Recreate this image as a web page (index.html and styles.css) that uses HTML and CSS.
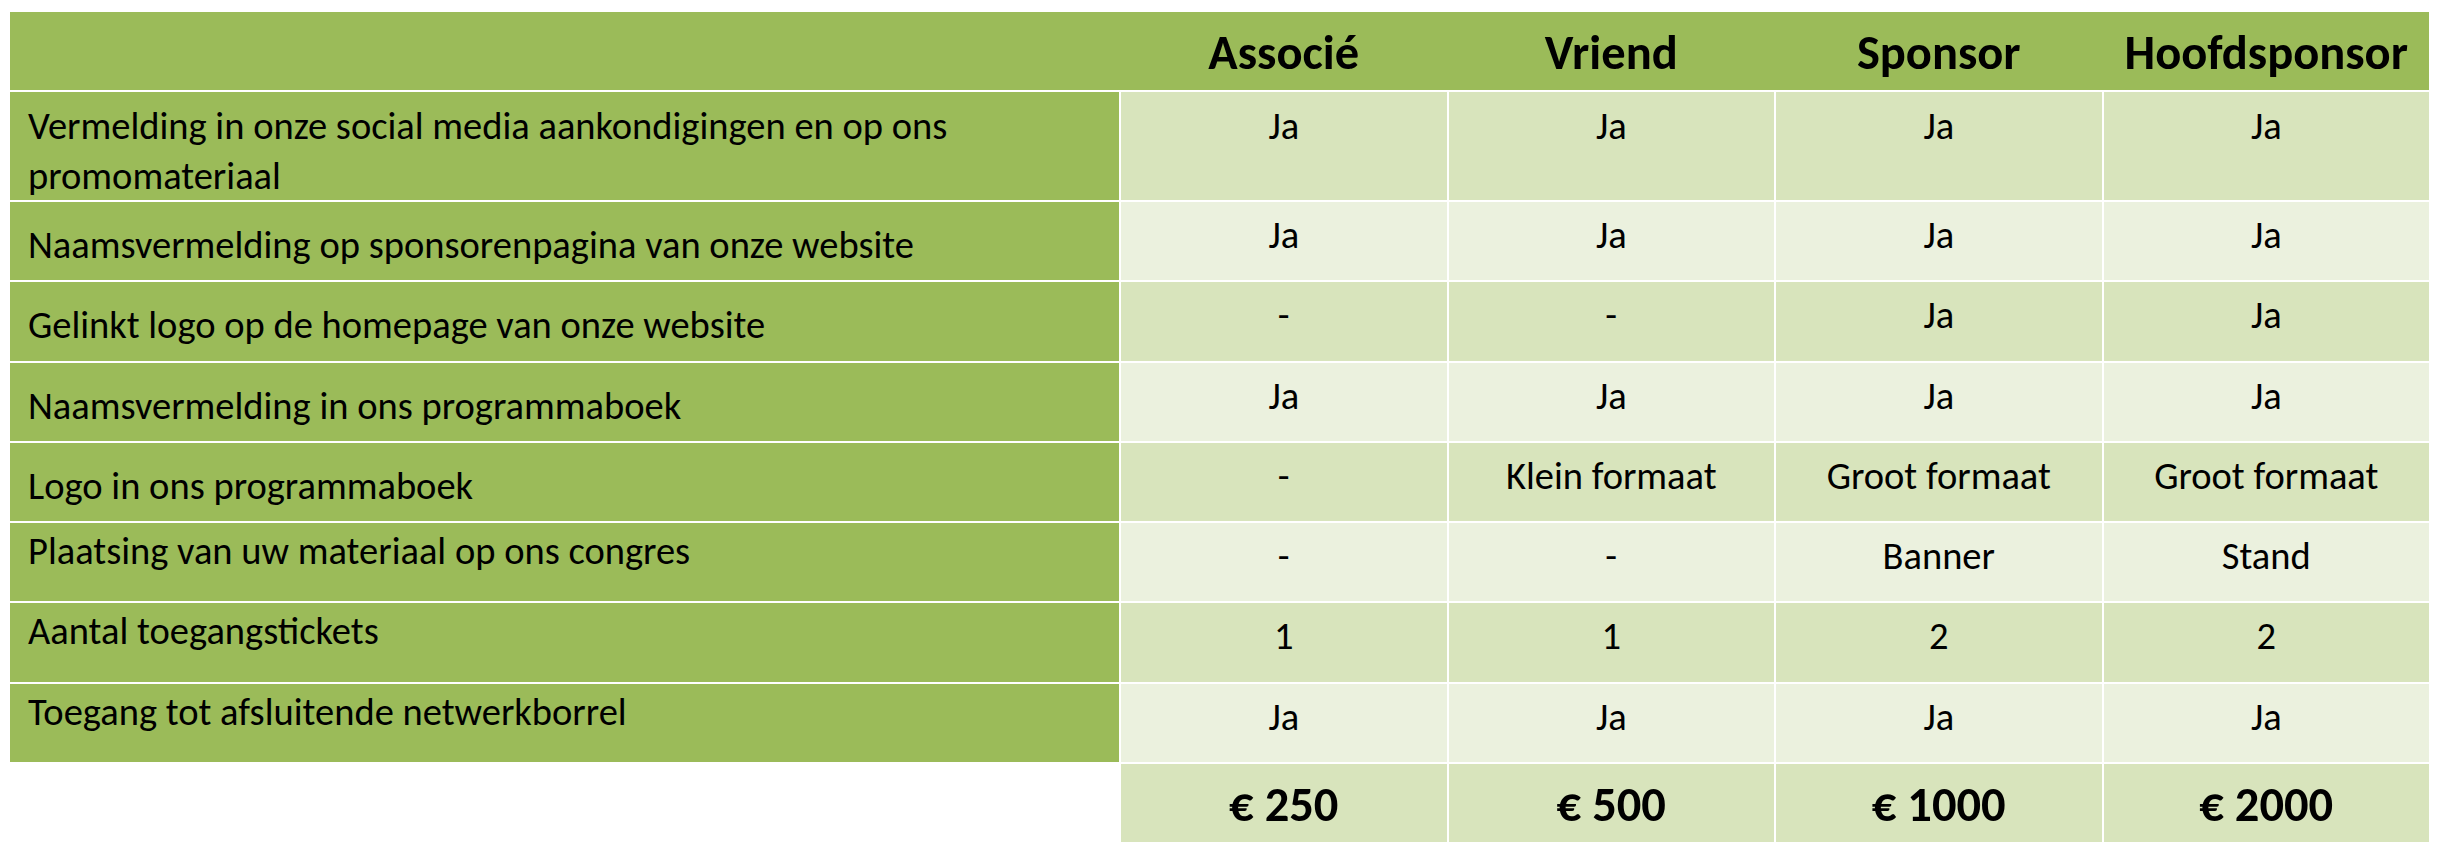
FILE: index.html
```html
<!DOCTYPE html>
<html lang="nl">
<head>
<meta charset="utf-8">
<title>Sponsorpakketten</title>
<link rel="stylesheet" href="styles.css">
</head>
<body>
<div class="table">
  <div class="head">
    <div class="head-cell"></div>
    <div class="head-cell">Associé</div>
    <div class="head-cell">Vriend</div>
    <div class="head-cell">Sponsor</div>
    <div class="head-cell">Hoofdsponsor</div>
  </div>

  <div class="row dark first">
    <div class="label">Vermelding in onze social media aankondigingen en op ons promomateriaal</div>
    <div class="cell">Ja</div><div class="cell">Ja</div><div class="cell">Ja</div><div class="cell">Ja</div>
  </div>
  <div class="row light">
    <div class="label low">Naamsvermelding op sponsorenpagina van onze website</div>
    <div class="cell">Ja</div><div class="cell">Ja</div><div class="cell">Ja</div><div class="cell">Ja</div>
  </div>
  <div class="row dark">
    <div class="label low">Gelinkt logo op de homepage van onze website</div>
    <div class="cell">-</div><div class="cell">-</div><div class="cell">Ja</div><div class="cell">Ja</div>
  </div>
  <div class="row light">
    <div class="label low">Naamsvermelding in ons programmaboek</div>
    <div class="cell">Ja</div><div class="cell">Ja</div><div class="cell">Ja</div><div class="cell">Ja</div>
  </div>
  <div class="row dark">
    <div class="label low">Logo in ons programmaboek</div>
    <div class="cell">-</div><div class="cell">Klein formaat</div><div class="cell">Groot formaat</div><div class="cell">Groot formaat</div>
  </div>
  <div class="row light">
    <div class="label high">Plaatsing van uw materiaal op ons congres</div>
    <div class="cell">-</div><div class="cell">-</div><div class="cell">Banner</div><div class="cell">Stand</div>
  </div>
  <div class="row dark">
    <div class="label high">Aantal toegangstickets</div>
    <div class="cell">1</div><div class="cell">1</div><div class="cell">2</div><div class="cell">2</div>
  </div>
  <div class="row light">
    <div class="label high">Toegang tot afsluitende netwerkborrel</div>
    <div class="cell">Ja</div><div class="cell">Ja</div><div class="cell">Ja</div><div class="cell">Ja</div>
  </div>

  <div class="row price-row">
    <div class="blank"></div>
    <div class="price">€ 250</div>
    <div class="price">€ 500</div>
    <div class="price">€ 1000</div>
    <div class="price">€ 2000</div>
  </div>
</div>
</body>
</html>
```
FILE: styles.css
```css
html, body {
  margin: 0;
  padding: 0;
  background: #ffffff;
}

body {
  font-family: "Carlito", "Lato", "Liberation Sans", sans-serif;
  color: #000000;
}

.table {
  display: grid;
  grid-template-columns: 1109px repeat(4, 1fr);
  grid-template-rows: 78px 108px repeat(8, 78.25px);
  gap: 2px;
  width: 2419px;
  margin: 12px 0 0 10px;
}

.head {
  grid-column: 1 / -1;
  display: grid;
  grid-template-columns: 1109px repeat(4, 1fr);
  column-gap: 2px;
  background: #9bbb59;
}

.head-cell {
  box-sizing: border-box;
  padding-top: 4px;
  font-weight: bold;
  font-size: 48.5px;
  line-height: 74px;
  text-align: center;
}

.row {
  display: contents;
}

.label,
.cell {
  box-sizing: border-box;
  padding-top: 8px;
  font-size: 38.5px;
  line-height: 50px;
}

.label {
  background: #9bbb59;
  padding-left: 18px;
  padding-right: 18px;
}

.row.first .label,
.row.first .cell {
  padding-top: 9px;
}

.label.low {
  padding-top: 18px;
}

.label.high {
  padding-top: 3px;
}

.cell {
  text-align: center;
}

.row.dark .cell {
  background: #d8e4bc;
}

.row.light .cell {
  background: #ebf1de;
}

.blank {
  background: transparent;
}

.price {
  background: #d8e4bc;
  box-sizing: border-box;
  padding-top: 4px;
  font-weight: bold;
  font-size: 48.5px;
  line-height: 74px;
  text-align: center;
}
```
